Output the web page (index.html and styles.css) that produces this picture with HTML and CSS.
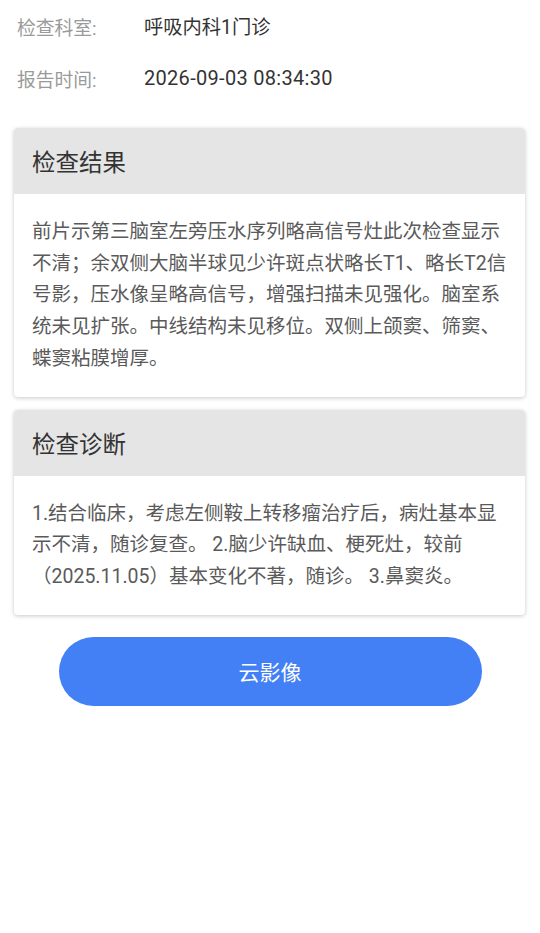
FILE: index.html
```html
<!DOCTYPE html>
<html lang="zh-CN">
<head>
<meta charset="utf-8">
<meta name="viewport" content="width=540">
<link rel="stylesheet" href="styles.css">
</head>
<body>
<div class="page">
  <div class="info">
    <div class="info-row"><span class="info-label">检查科室:</span><span class="info-value">呼吸内科1门诊</span></div>
    <div class="info-row"><span class="info-label">报告时间:</span><span class="info-value info-value-num">2026-09-03 08:34:30</span></div>
  </div>
  <div class="card">
    <div class="card-head">检查结果</div>
    <div class="card-body">前片示第三脑室左旁压水序列略高信号灶此次检查显示不清；余双侧大脑半球见少许斑点状略长T1、略长T2信号影，压水像呈略高信号，增强扫描未见强化。脑室系统未见扩张。中线结构未见移位。双侧上颌窦、筛窦、蝶窦粘膜增厚。</div>
  </div>
  <div class="card">
    <div class="card-head">检查诊断</div>
    <div class="card-body">1.结合临床，考虑左侧鞍上转移瘤治疗后，病灶基本显示不清，随诊复查。 2.脑少许缺血、梗死灶，较前（2025.11.05）基本变化不著，随诊。 3.鼻窦炎。</div>
  </div>
  <div class="btn">云影像</div>
</div>
</body>
</html>
```

FILE: styles.css
```css
html, body {
  margin: 0;
  padding: 0;
  background: #ffffff;
}
body {
  font-family: "Roboto", "Noto Sans CJK SC", sans-serif;
  width: 540px;
  min-height: 933px;
}
.page {
  display: flex;
  flex-direction: column;
  padding-bottom: 20px;
}
.info {
  display: flex;
  flex-direction: column;
}
.info-row {
  height: 52px;
  display: flex;
  align-items: center;
  padding-left: 17px;
  font-size: 18.8px;
}
.info-label {
  width: 127px;
  color: #9a9a9a;
  flex: none;
}
.info-value {
  color: #333333;
  font-size: 19.3px;
}
.info-value-num {
  font-size: 20px;
  letter-spacing: 0.3px;
}
.card {
  margin: 24px 15px 0 14px;
  background: #ffffff;
  border-radius: 4px;
  box-shadow: 0 1px 4px rgba(0, 0, 0, 0.22);
  overflow: hidden;
}
.card + .card {
  margin-top: 13px;
}
.card-head {
  height: 66px;
  background: #e5e5e5;
  display: flex;
  align-items: center;
  padding-left: 18px;
  font-size: 23.5px;
  color: #333333;
}
.card-body {
  padding: 22px 12px 22px 18px;
  font-size: 19.5px;
  line-height: 31.7px;
  color: #5a5a5a;
}
.btn {
  margin: 22px auto 0;
  width: 423px;
  height: 69px;
  border-radius: 35px;
  background: #4380f5;
  color: #ffffff;
  font-size: 21px;
  display: flex;
  align-items: center;
  justify-content: center;
}
```
